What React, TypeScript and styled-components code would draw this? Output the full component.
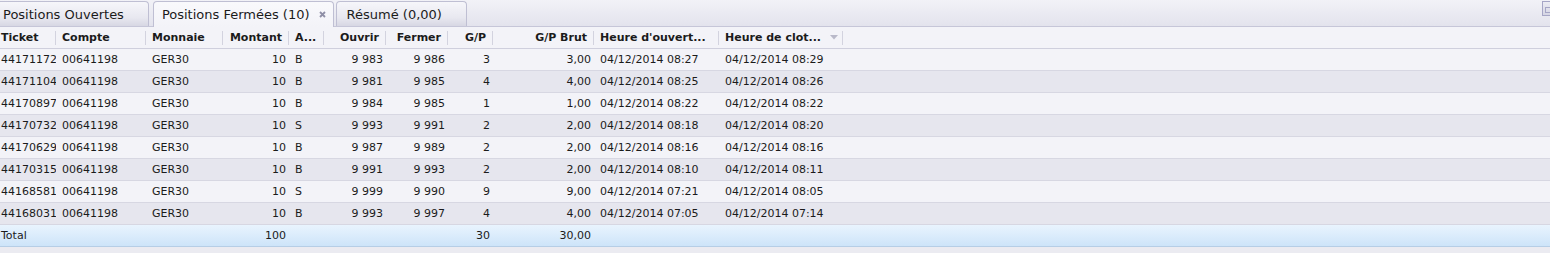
import React from 'react'
import styled, { createGlobalStyle } from 'styled-components'

const GlobalStyle = createGlobalStyle`
  html, body {
    margin: 0;
    padding: 0;
    background: #ebebf1;
  }
  body {
    font-family: "DejaVu Sans", Verdana, sans-serif;
    color: #1b1b1b;
  }
`

// column widths of the grid, Ticket is scrolled a bit to the left
const COLS = '61px 90px 77px 66px 35px 62px 62px 45px 101px 125px 124px 1fr'

const Page = styled.div`
  width: 1550px;
  height: 253px;
  overflow: hidden;
  background: #ebebf1;
`

const TabBar = styled.div`
  display: flex;
  align-items: flex-end;
  height: 26px;
  border-bottom: 1px solid #c6c6d8;
  background: linear-gradient(#f2f2f7, #e3e3ed);
`

const TabStrip = styled.div`
  display: flex;
  align-items: flex-end;
  gap: 3px;
  margin-left: -8px;
`

const Tab = styled.div<{ $active?: boolean }>`
  display: flex;
  align-items: center;
  gap: 9px;
  box-sizing: border-box;
  height: ${p => (p.$active ? 26 : 25)}px;
  margin: ${p => (p.$active ? '0 -1px -1px 1px' : '0')};
  padding: ${p => (p.$active ? '0 7px 0 8px' : '0 24px 0 10px')};
  border: 1px solid #bfbfd3;
  border-bottom: none;
  border-radius: 4px 4px 0 0;
  background: ${p =>
    p.$active
      ? 'linear-gradient(#f9f9fc, #f3f3f8)'
      : 'linear-gradient(#f6f6fa, #e8e8f0 65%, #d7d7e3)'};
  font-size: 13px;
  white-space: nowrap;
`

const CloseIcon = () => (
  <svg width="7" height="7" viewBox="0 0 7 7">
    <path d="M1 1L6 6M6 1L1 6" stroke="#8e8ea6" strokeWidth="1.8" />
  </svg>
)

const WindowButton = styled.div`
  align-self: flex-start;
  position: relative;
  box-sizing: border-box;
  width: 14px;
  height: 15px;
  margin: 1px -6px 0 auto;
  border: 1px solid #a6a6c6;
  background: linear-gradient(#ececf3, #d6d6e4);

  &::after {
    content: '';
    position: absolute;
    left: 2px;
    top: 5px;
    width: 5px;
    height: 4px;
    border: 1px solid #a6a6c6;
  }
`

const Table = styled.div`
  margin-left: -5px;
  width: 1555px;
  font-size: 11px;
`

const HeaderRow = styled.div`
  display: grid;
  grid-template-columns: ${COLS};
  align-items: center;
  height: 21px;
  border-bottom: 1px solid #cfcfdd;
  background: #f3f3f8;
`

const HeaderCell = styled.div<{ $right?: boolean }>`
  display: flex;
  align-items: center;
  justify-content: ${p => (p.$right ? 'flex-end' : 'space-between')};
  box-sizing: border-box;
  height: 14px;
  padding: ${p => (p.$right ? '0 6px 0 6px' : '0 4px 0 6px')};
  border-right: 1px solid #d3d3df;
  font-weight: bold;
  white-space: nowrap;
  overflow: hidden;

  &:last-child {
    border-right: none;
  }
`

const Row = styled.div<{ $alt?: boolean }>`
  display: grid;
  grid-template-columns: ${COLS};
  align-items: center;
  height: 21px;
  border-bottom: 1px solid #d7d7e2;
  background: ${p => (p.$alt ? '#e6e6ee' : '#f3f3f8')};
`

const TotalRow = styled(Row)`
  border-bottom: 1px solid #b6cee6;
  background: linear-gradient(#e9f4fe, #cde4f9);
`

const Cell = styled.div<{ $right?: boolean }>`
  box-sizing: border-box;
  padding: ${p => (p.$right ? '0 3px 0 6px' : '0 2px 0 6px')};
  text-align: ${p => (p.$right ? 'right' : 'left')};
  white-space: nowrap;
  overflow: hidden;
`

const SortArrow = () => (
  <svg width="8" height="5" viewBox="0 0 8 5">
    <path d="M0 0H8L4 4.5Z" fill="#b9b9c9" />
  </svg>
)

const columns: { label: string; right?: boolean }[] = [
  { label: 'Ticket' },
  { label: 'Compte' },
  { label: 'Monnaie' },
  { label: 'Montant', right: true },
  { label: 'A...' },
  { label: 'Ouvrir', right: true },
  { label: 'Fermer', right: true },
  { label: 'G/P', right: true },
  { label: 'G/P Brut', right: true },
  { label: "Heure d'ouvert..." },
  { label: 'Heure de clot...' },
]

const rows = [
  ['441711725', '00641198', 'GER30', '10', 'B', '9 983', '9 986', '3', '3,00', '04/12/2014 08:27', '04/12/2014 08:29'],
  ['441711048', '00641198', 'GER30', '10', 'B', '9 981', '9 985', '4', '4,00', '04/12/2014 08:25', '04/12/2014 08:26'],
  ['441708973', '00641198', 'GER30', '10', 'B', '9 984', '9 985', '1', '1,00', '04/12/2014 08:22', '04/12/2014 08:22'],
  ['441707321', '00641198', 'GER30', '10', 'S', '9 993', '9 991', '2', '2,00', '04/12/2014 08:18', '04/12/2014 08:20'],
  ['441706298', '00641198', 'GER30', '10', 'B', '9 987', '9 989', '2', '2,00', '04/12/2014 08:16', '04/12/2014 08:16'],
  ['441703154', '00641198', 'GER30', '10', 'B', '9 991', '9 993', '2', '2,00', '04/12/2014 08:10', '04/12/2014 08:11'],
  ['441685811', '00641198', 'GER30', '10', 'S', '9 999', '9 990', '9', '9,00', '04/12/2014 07:21', '04/12/2014 08:05'],
  ['441680317', '00641198', 'GER30', '10', 'B', '9 993', '9 997', '4', '4,00', '04/12/2014 07:05', '04/12/2014 07:14'],
]

const totals = ['Total', '', '', '100', '', '', '', '30', '30,00', '', '']

const App = () => {
  return (
    <Page>
      <GlobalStyle />
      <TabBar>
        <TabStrip>
          <Tab>Positions Ouvertes</Tab>
          <Tab $active>
            Positions Fermées (10)
            <CloseIcon />
          </Tab>
          <Tab>Résumé (0,00)</Tab>
        </TabStrip>
        <WindowButton />
      </TabBar>
      <Table>
        <HeaderRow>
          {columns.map((c, i) => (
            <HeaderCell key={c.label} $right={c.right}>
              <span>{c.label}</span>
              {i === columns.length - 1 && <SortArrow />}
            </HeaderCell>
          ))}
          <HeaderCell />
        </HeaderRow>
        {rows.map((r, i) => (
          <Row key={r[0]} $alt={i % 2 === 1}>
            {r.map((v, j) => (
              <Cell key={j} $right={columns[j].right}>{v}</Cell>
            ))}
            <Cell />
          </Row>
        ))}
        <TotalRow>
          {totals.map((v, j) => (
            <Cell key={j} $right={columns[j].right}>{v}</Cell>
          ))}
          <Cell />
        </TotalRow>
      </Table>
    </Page>
  )
}

export default App
